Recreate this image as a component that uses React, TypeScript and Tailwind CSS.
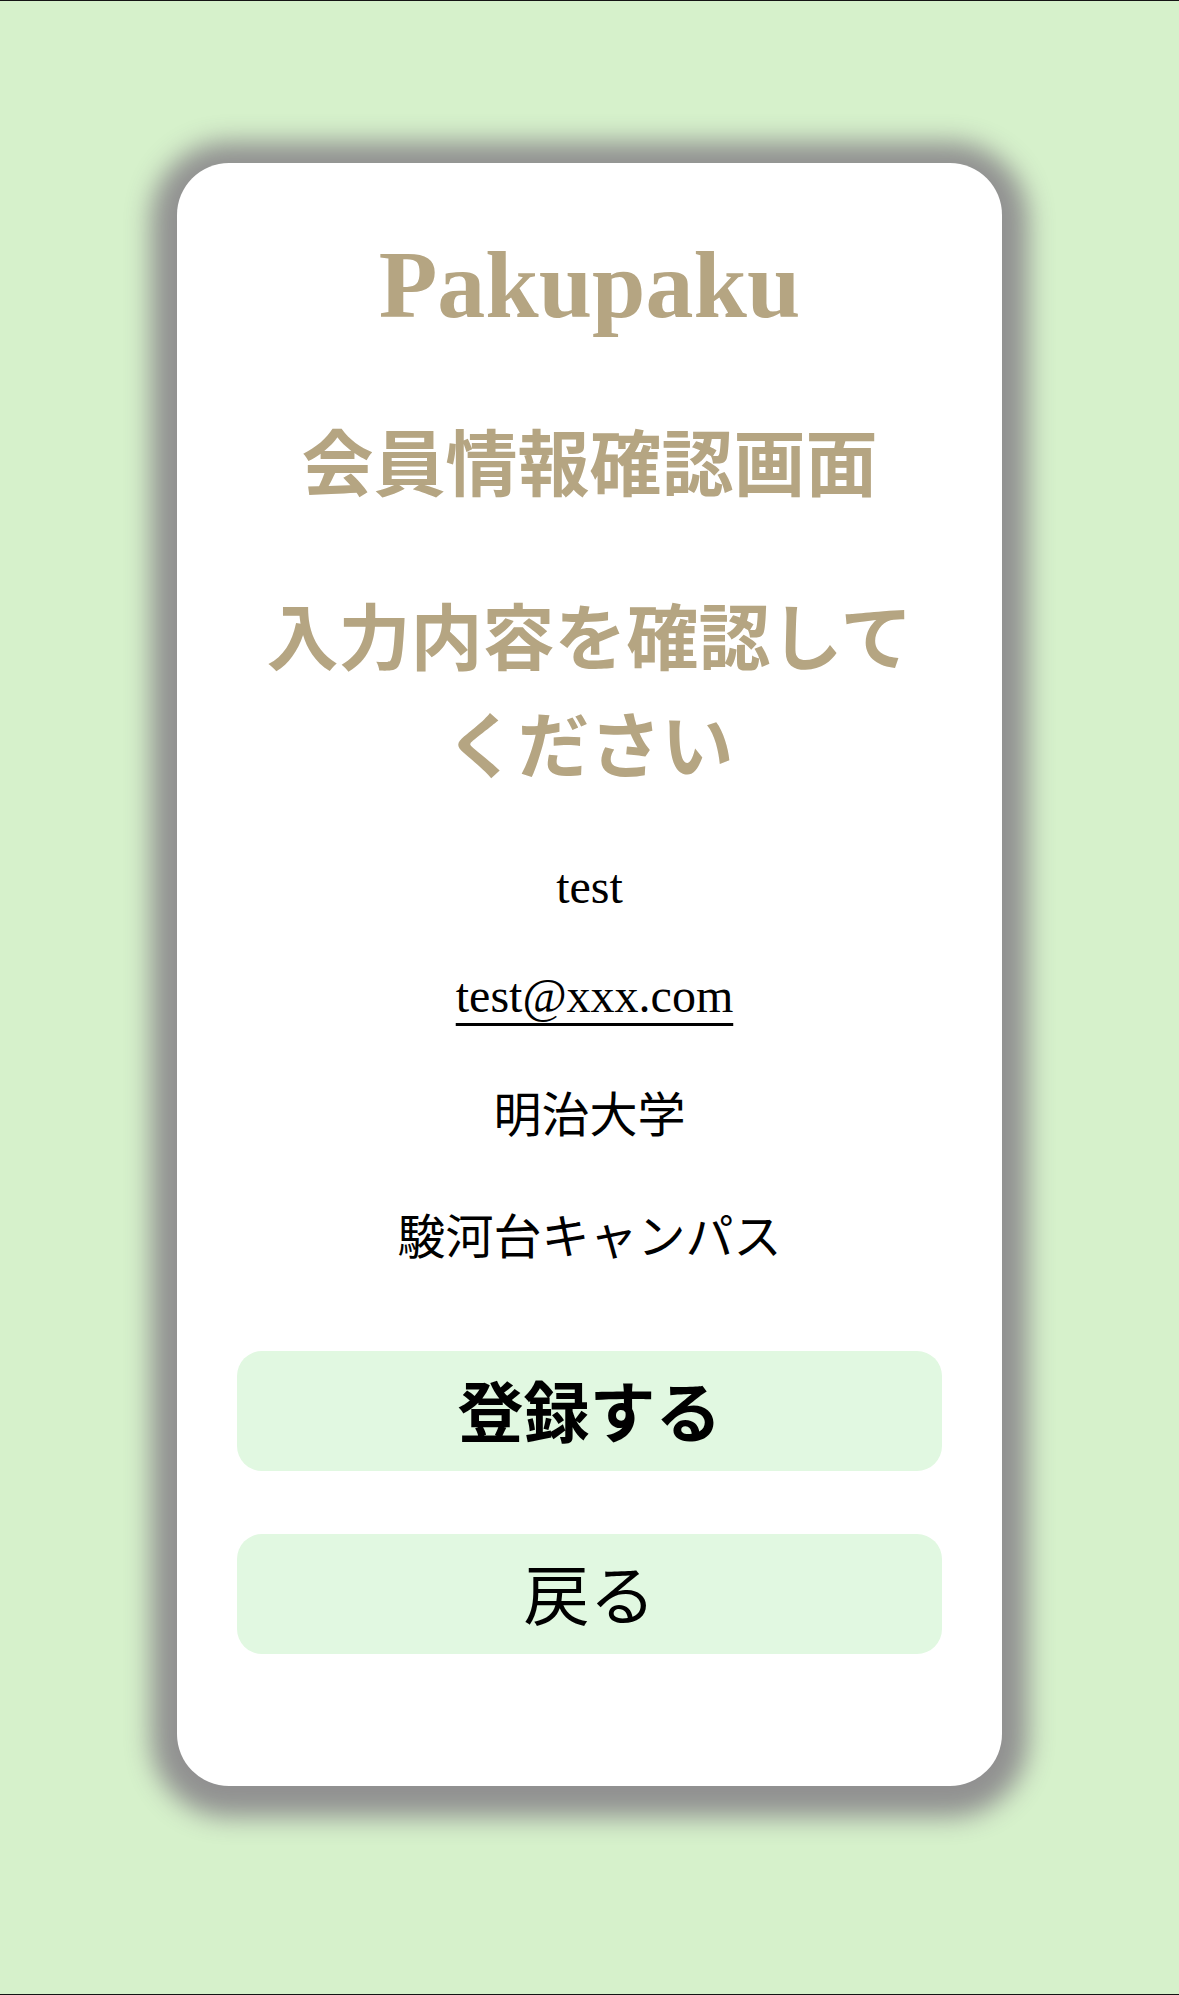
import React from 'react';

const serif = "font-['Liberation_Serif','Noto_Sans_CJK_JP',serif]";
const jp = "font-['Noto_Sans_CJK_JP','Noto_Sans',sans-serif]";

interface Member {
  name: string;
  email: string;
  university: string;
  campus: string;
}

const member: Member = {
  name: 'test',
  email: 'test@xxx.com',
  university: '明治大学',
  campus: '駿河台キャンパス',
};

export default function App() {
  return (
    <div className="h-[1995px] bg-[#d6f1cb] border-y border-[#141414] pt-[162px] box-border">
      {/* Confirmation Card */}
      <div className="mx-auto w-[70%] bg-white rounded-[52px] shadow-[0_5px_26px_26px_#919191] px-[60px] pt-[50px] pb-[132px] flex flex-col items-stretch text-center">
        <h1 className={`${serif} text-[96px] leading-[144px] font-bold text-[#b5a582]`}>Pakupaku</h1>
        <h2 className={`${jp} mt-[48px] text-[72px] leading-[108px] font-bold text-[#b5a582]`}>会員情報確認画面</h2>
        <h3 className={`${jp} mt-[66px] text-[72px] leading-[108px] font-bold text-[#b5a582]`}>入力内容を確認してください</h3>

        {/* Entered values */}
        <p className={`${serif} mt-[68px] text-[48px] leading-[48px] text-black`}>{member.name}</p>
        <p className={`${serif} mt-[61px] pl-[10px] text-[48px] leading-[48px] text-black`}>
          <a href="#" className="underline decoration-[3px] underline-offset-[11px] text-black">{member.email}</a>
        </p>
        <p className={`${serif} mt-[72px] text-[48px] leading-[48px] text-black`}>{member.university}</p>
        <p className={`${serif} mt-[74px] text-[48px] leading-[48px] text-black`}>{member.campus}</p>

        {/* Actions */}
        <button className={`${jp} mt-[89px] h-[120px] rounded-[25px] bg-[#e1f8e1] flex items-center justify-center text-[66px] leading-none font-bold text-black pb-[6px]`}>
          登録する
        </button>
        <button className={`${jp} mt-[63px] h-[120px] rounded-[25px] bg-[#e1f8e1] flex items-center justify-center text-[66px] leading-none font-normal text-black pb-[6px]`}>
          戻る
        </button>
      </div>
    </div>
  );
}
